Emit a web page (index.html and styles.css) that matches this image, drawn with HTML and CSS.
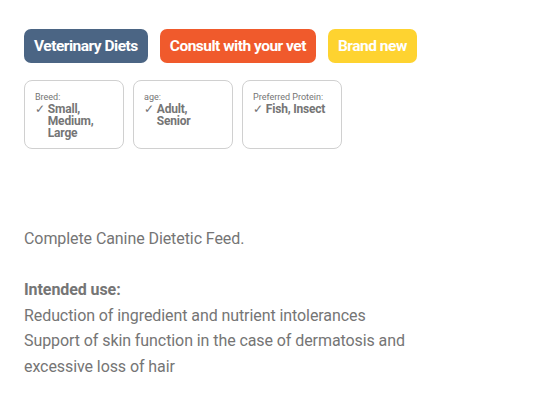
FILE: index.html
```html
<!DOCTYPE html>
<html>
<head>
<meta charset="utf-8">
<link rel="stylesheet" href="styles.css">
</head>
<body>
<div class="page">
  <div class="badges">
    <span class="badge badge-blue">Veterinary Diets</span>
    <span class="badge badge-orange">Consult with your vet</span>
    <span class="badge badge-yellow">Brand new</span>
  </div>
  <div class="cards">
    <div class="card">
      <div class="card-label">Breed:</div>
      <div class="card-value"><span class="check">✓</span><span>Small, Medium, Large</span></div>
    </div>
    <div class="card">
      <div class="card-label">age:</div>
      <div class="card-value"><span class="check">✓</span><span>Adult, Senior</span></div>
    </div>
    <div class="card">
      <div class="card-label">Preferred Protein:</div>
      <div class="card-value"><span class="check">✓</span><span>Fish, Insect</span></div>
    </div>
  </div>
  <div class="desc">
    <p>Complete Canine Dietetic Feed.</p>
    <p><strong>Intended use:</strong><br>Reduction of ingredient and nutrient intolerances<br>Support of skin function in the case of dermatosis and<br>excessive loss of hair</p>
  </div>
</div>
</body>
</html>
```
FILE: styles.css
```css
html, body {
  margin: 0;
  padding: 0;
  background: #ffffff;
}
body {
  font-family: Roboto, "Liberation Sans", sans-serif;
  color: #757575;
}
.page {
  padding: 29px 24px 0 24px;
}
.badges {
  display: flex;
  gap: 12px;
}
.badge {
  display: inline-block;
  height: 34px;
  line-height: 34px;
  padding: 0 10px;
  border-radius: 7px;
  color: #ffffff;
  font-weight: 700;
  font-size: 15.5px;
  letter-spacing: -0.5px;
}
.badge-blue { background: #4b6584; }
.badge-orange { background: #f05a2c; }
.badge-yellow { background: #fed330; }
.cards {
  display: flex;
  gap: 9px;
  margin-top: 17px;
}
.card {
  width: 100px;
  height: 69px;
  box-sizing: border-box;
  border: 1px solid #d0d0d0;
  border-radius: 8px;
  padding: 11px 10px 0 10px;
}
.card-label {
  font-size: 9px;
  line-height: 11px;
}
.card-value {
  display: flex;
  font-size: 12px;
  font-weight: 700;
  line-height: 12px;
  letter-spacing: -0.2px;
}
.check {
  font-weight: 400;
  margin-right: 3px;
}
.desc {
  margin-top: 77px;
  font-size: 16px;
  line-height: 25.6px;
  letter-spacing: -0.08px;
}
.desc p {
  margin: 0 0 25.6px 0;
}
.desc strong {
  font-weight: 700;
}
```
